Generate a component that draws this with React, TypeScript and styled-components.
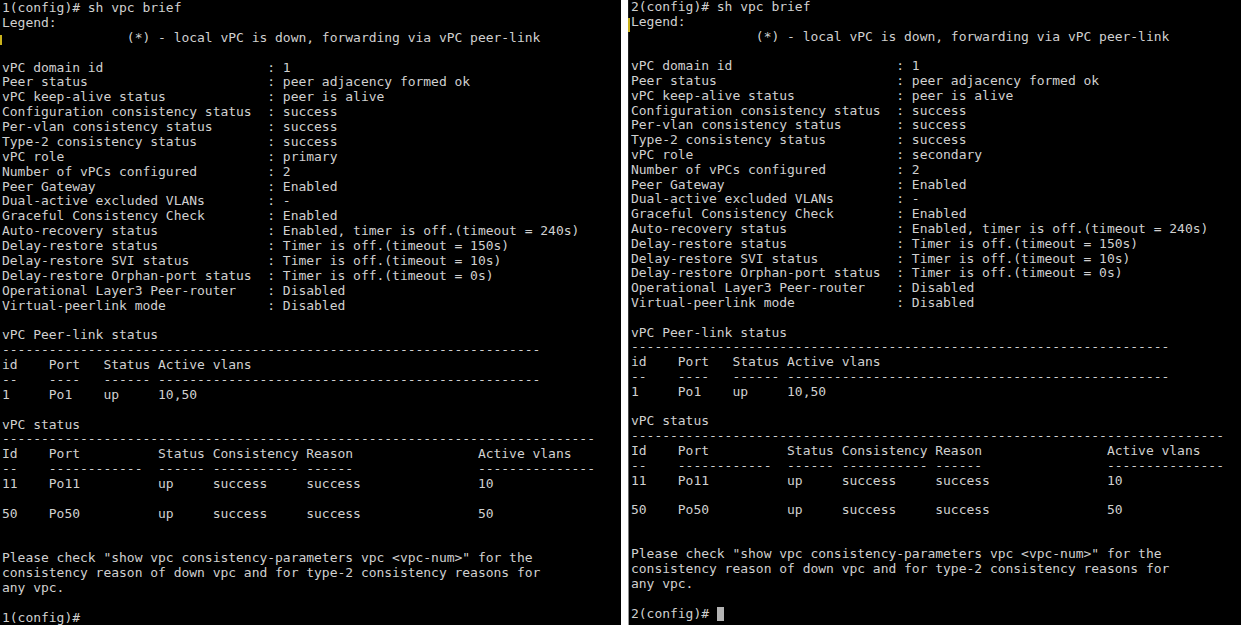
import React from "react";
import styled, { createGlobalStyle } from "styled-components";

const Global = createGlobalStyle`
  html, body { margin: 0; padding: 0; background: #ffffff; }
  #root { width: 1241px; height: 625px; overflow: hidden; }
`;

const Screen = styled.div`
  display: flex;
  gap: 7px;
  width: 1241px;
  height: 625px;
  background: #ffffff;
`;

const Pane = styled.div<{ $width: number; $lh: number; $top: number; $edge?: boolean }>`
  position: relative;
  width: ${(p) => p.$width}px;
  height: 625px;
  flex: none;
  background: #000000;
  overflow: hidden;
  padding: ${(p) => p.$top}px 0 0 ${(p) => (p.$edge ? 3 : 2)}px;
  box-sizing: border-box;
  font-family: "DejaVu Sans Mono", "Liberation Mono", monospace;
  font-size: 13px;
  letter-spacing: -0.025px;
  line-height: ${(p) => p.$lh}px;
  color: #d0d0d0;
`;

const Edge = styled.div`
  position: absolute;
  left: 0;
  top: 0;
  bottom: 0;
  width: 1px;
  background: linear-gradient(to bottom, #1a1a1a 0%, #3a3a3a 60%, #9a9a9a 100%);
`;

const Mark = styled.div<{ $top: number; $h: number }>`
  position: absolute;
  left: 0;
  top: ${(p) => p.$top}px;
  width: 2px;
  height: ${(p) => p.$h}px;
  background: #c9b21c;
`;

const Pre = styled.pre`
  margin: 0;
  font: inherit;
  letter-spacing: inherit;
  white-space: pre;
`;

const Cursor = styled.span`
  display: inline-block;
  width: 7px;
  height: 14px;
  background: #b4b4b4;
  vertical-align: -3px;
`;

const body = (n: string, role: string) => `${n}(config)# sh vpc brief
Legend:
                (*) - local vPC is down, forwarding via vPC peer-link

vPC domain id                     : 1
Peer status                       : peer adjacency formed ok
vPC keep-alive status             : peer is alive
Configuration consistency status  : success
Per-vlan consistency status       : success
Type-2 consistency status         : success
vPC role                          : ${role}
Number of vPCs configured         : 2
Peer Gateway                      : Enabled
Dual-active excluded VLANs        : -
Graceful Consistency Check        : Enabled
Auto-recovery status              : Enabled, timer is off.(timeout = 240s)
Delay-restore status              : Timer is off.(timeout = 150s)
Delay-restore SVI status          : Timer is off.(timeout = 10s)
Delay-restore Orphan-port status  : Timer is off.(timeout = 0s)
Operational Layer3 Peer-router    : Disabled
Virtual-peerlink mode             : Disabled

vPC Peer-link status
---------------------------------------------------------------------
id    Port   Status Active vlans
--    ----   ------ -------------------------------------------------
1     Po1    up     10,50

vPC status
----------------------------------------------------------------------------
Id    Port          Status Consistency Reason                Active vlans
--    ------------  ------ ----------- ------                ---------------
11    Po11          up     success     success               10

50    Po50          up     success     success               50


Please check "show vpc consistency-parameters vpc <vpc-num>" for the
consistency reason of down vpc and for type-2 consistency reasons for
any vpc.

${n}(config)# `;

export default function App() {
  return (
    <>
      <Global />
      <Screen>
        <Pane $width={621} $lh={14.87} $top={1}>
          <Mark $top={35} $h={10} />
          <Pre>{body("1", "primary")}</Pre>
        </Pane>
        <Pane $width={613} $lh={14.8} $top={0} $edge>
          <Edge />
          <Mark $top={18} $h={14} />
          <Pre>
            {body("2", "secondary")}
            <Cursor />
          </Pre>
        </Pane>
      </Screen>
    </>
  );
}
